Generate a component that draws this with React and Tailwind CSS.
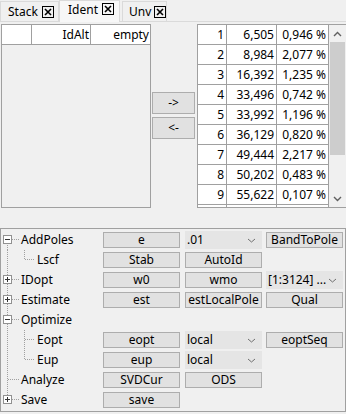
import React from "react";

const CloseBox = () => (
  <svg width="12" height="12" viewBox="0 0 12 12" className="shrink-0">
    <rect x="0.5" y="0.5" width="11" height="11" fill="none" stroke="#000" />
    <path d="M3 3 L9 9 M9 3 L3 9" stroke="#000" strokeWidth="1.6" />
  </svg>
);

const Chevron = ({ up }) => (
  <svg width="9" height="6" viewBox="0 0 9 6">
    <path d={up ? "M1 5 L4.5 1.5 L8 5" : "M1 1 L4.5 4.5 L8 1"} fill="none" stroke="#606060" strokeWidth="1.4" />
  </svg>
);

const SmallChevron = () => (
  <svg width="9" height="5" viewBox="0 0 9 5">
    <path d="M1 1 L4.5 4 L8 1" fill="none" stroke="#707070" strokeWidth="1" />
  </svg>
);

const dot = { stroke: "#a0a0a0", strokeDasharray: "1 1", shapeRendering: "crispEdges" };

function TreeLines({ root, box, child }) {
  const w = child ? 35 : 19;
  return (
    <svg width={w} height="20" className="shrink-0">
      {root === "full" && <line x1="6.5" x2="6.5" y1="0" y2="20" style={dot} />}
      {root === "top" && <line x1="6.5" x2="6.5" y1="0" y2="9" style={dot} />}
      {root === "bottom" && <line x1="6.5" x2="6.5" y1="9" y2="20" style={dot} />}
      {!child && <line x1={box ? 11 : 7} x2="18" y1="9.5" y2="9.5" style={dot} />}
      {child === "full" && <line x1="23.5" x2="23.5" y1="0" y2="20" style={dot} />}
      {child === "top" && <line x1="23.5" x2="23.5" y1="0" y2="9" style={dot} />}
      {child && <line x1="24" x2="34" y1="9.5" y2="9.5" style={dot} />}
      {box && (
        <g shapeRendering="crispEdges">
          <rect x="2.5" y="5.5" width="8" height="8" fill="#fff" stroke="#919191" />
          <line x1="4" x2="9" y1="9.5" y2="9.5" stroke="#333" />
          {box === "plus" && <line x1="6.5" x2="6.5" y1="7" y2="12" stroke="#333" />}
        </g>
      )}
    </svg>
  );
}

const Btn = ({ children }) => (
  <div className="mt-[2px] h-[16px] w-[77px] shrink-0 bg-[#e1e1e1] border border-[#adadad] flex items-center justify-center leading-none">
    {children}
  </div>
);

const Sel = ({ children }) => (
  <div className="mt-px h-[18px] w-[77px] shrink-0 bg-[#e5e5e5] flex items-center justify-between pl-[2px] pr-[6px] leading-none">
    <span>{children}</span>
    <SmallChevron />
  </div>
);

const Empty = () => <div className="w-[77px] shrink-0" />;

const treeRows = [
  { label: "AddPoles", t: { root: "bottom", box: "minus" }, c: [<Btn>e</Btn>, <Sel>.01</Sel>, <Btn>BandToPole</Btn>] },
  { label: "Lscf", t: { root: "full", child: "top" }, c: [<Btn>Stab</Btn>, <Btn>AutoId</Btn>, <Empty />] },
  { label: "IDopt", t: { root: "full", box: "plus" }, c: [<Btn>w0</Btn>, <Btn>wmo</Btn>, <Sel>[1:3124] ...</Sel>] },
  { label: "Estimate", t: { root: "full", box: "plus" }, c: [<Btn>est</Btn>, <Btn>estLocalPole</Btn>, <Btn>Qual</Btn>] },
  { label: "Optimize", t: { root: "full", box: "minus" }, c: [] },
  { label: "Eopt", t: { root: "full", child: "full" }, c: [<Btn>eopt</Btn>, <Sel>local</Sel>, <Btn>eoptSeq</Btn>] },
  { label: "Eup", t: { root: "full", child: "top" }, c: [<Btn>eup</Btn>, <Sel>local</Sel>, <Empty />] },
  { label: "Analyze", t: { root: "full" }, c: [<Btn>SVDCur</Btn>, <Btn>ODS</Btn>, <Empty />] },
  { label: "Save", t: { root: "top", box: "plus" }, c: [<Btn>save</Btn>, <Empty />, <Empty />] },
];

const data = [
  ["1", "6,505", "0,946 %"],
  ["2", "8,984", "2,077 %"],
  ["3", "16,392", "1,235 %"],
  ["4", "33,496", "0,742 %"],
  ["5", "33,992", "1,196 %"],
  ["6", "36,129", "0,820 %"],
  ["7", "49,444", "2,217 %"],
  ["8", "50,202", "0,483 %"],
  ["9", "55,622", "0,107 %"],
  ["", "", ""],
];

export default function App() {
  return (
    <div className="w-[346px] h-[414px] overflow-hidden bg-[#f0f0f0] text-[12px] text-black font-['Noto_Sans',sans-serif]">
      {/* Tabs */}
      <div className="h-[22px] flex items-end border-b border-[#dadada]">
        <div className="h-[20px] w-[59px] flex items-center gap-[4px] pl-[7px] border border-b-0 border-[#dadada] bg-[#f0f0f0] leading-none">
          <span>Stack</span>
          <CloseBox />
        </div>
        <div className="h-[22px] w-[61px] -mb-px flex items-start pt-[2px] gap-[4px] pl-[8px] border border-b-0 border-[#dadada] bg-[#f7f7f7] leading-none">
          <span className="mt-[1px]">Ident</span>
          <CloseBox />
        </div>
        <div className="ml-[2px] h-[20px] w-[45px] flex items-center gap-[3px] pl-[6px] border border-b-0 border-[#dadada] bg-[#f0f0f0] leading-none">
          <span>Unv</span>
          <CloseBox />
        </div>
      </div>

      {/* Top area */}
      <div className="mt-[2px] flex h-[184px]">
        {/* Left table */}
        <div className="ml-px w-[150px] h-full border border-[#a0a0a0] bg-[#f0f0f0]">
          <div className="flex h-[20px] bg-white border-b border-[#a0a0a0] leading-none">
            <div className="w-[30px] border-r border-[#a0a0a0]" />
            <div className="w-[59px] border-r border-[#a0a0a0] flex items-center justify-end pr-px">IdAlt</div>
            <div className="flex-1 flex items-center justify-end pr-px">empty</div>
          </div>
        </div>

        {/* Move buttons */}
        <div className="ml-px w-[43px] pt-[68px] flex flex-col gap-[3px]">
          <div className="h-[22px] bg-[#e1e1e1] border border-[#adadad] flex items-center justify-center leading-none">-&gt;</div>
          <div className="h-[22px] bg-[#e1e1e1] border border-[#adadad] flex items-center justify-center leading-none">&lt;-</div>
        </div>

        {/* Right table */}
        <div className="ml-[2px] flex-1 h-full border border-r-0 border-[#a0a0a0] flex overflow-hidden">
          <div className="w-[131px] flex flex-col bg-white">
            {data.map((r, i) => (
              <div key={i} className="flex h-[20px] shrink-0 border-b border-[#a0a0a0] leading-none">
                <div className="w-[29px] border-r border-[#a0a0a0] flex items-center justify-end pr-[2px]">{r[0]}</div>
                <div className="w-[50px] border-r border-[#a0a0a0] flex items-center justify-end pr-[2px]">{r[1]}</div>
                <div className="w-[52px] border-r border-[#a0a0a0] flex items-center justify-end pr-[2px]">{r[2]}</div>
              </div>
            ))}
          </div>
          <div className="flex-1 bg-[#f0f0f0] flex flex-col items-center">
            <div className="h-[17px] flex items-center justify-center"><Chevron up /></div>
            <div className="w-[15px] h-[113px] bg-[#cdcdcd]" />
            <div className="flex-1" />
            <div className="h-[17px] flex items-center justify-center"><Chevron /></div>
          </div>
        </div>
      </div>

      {/* Bottom tree panel */}
      <div className="mt-[20px] h-[184px] border border-[#a0a0a0] pt-px">
        {treeRows.map((r, i) => (
          <div key={i} className="flex h-[20px] items-start">
            <div className="w-[102px] shrink-0 h-[20px] flex items-center leading-none">
              <TreeLines {...r.t} />
              <span className="ml-px">{r.label}</span>
            </div>
            {r.c[0] || <Empty />}
            <div className="w-[5px] shrink-0" />
            {r.c[1] || <Empty />}
            <div className="w-[4px] shrink-0" />
            {r.c[2] || <Empty />}
          </div>
        ))}
      </div>
    </div>
  );
}
